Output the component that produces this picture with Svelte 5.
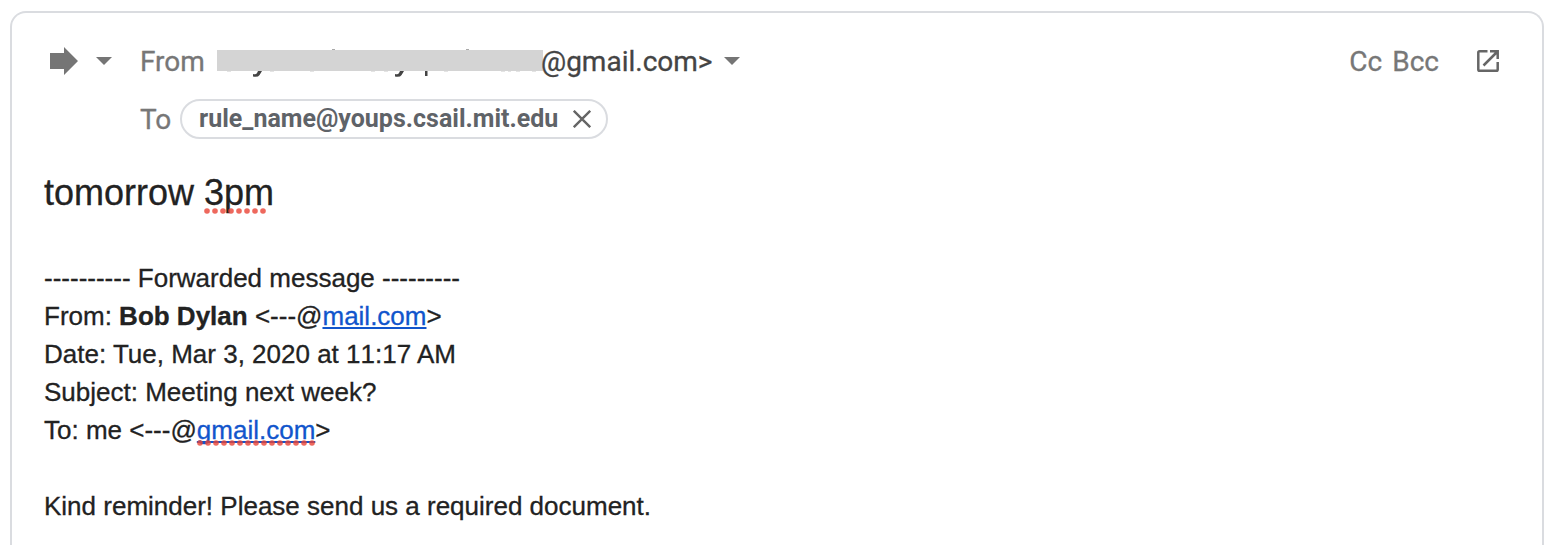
<script>
  const dots = (n, step) => Array.from({ length: n }, (_, i) => 3 + i * step);
  const tails = [
    'M45 22L42.600 26Q41 28.500 36 27.600V25Q39 26 40 24L41 22Z',
    'M187 22L184.600 26Q183 28.500 178 27.600V25Q181 26 182 24L183 22Z',
    'M208 21h2.500v6h-2.500z'
  ];
</script>

{#snippet spelling(n, width, step)}
  <svg class="spelling" {width} height="6" viewBox="0 0 {width} 6" aria-hidden="true">
    {#each dots(n, step) as cx}
      <circle {cx} cy="3" r="2.8" />
    {/each}
  </svg>
{/snippet}

<main class="compose">
  <header>
    <svg class="forward" width="28" height="28" viewBox="0 0 28 28"><path d="M0 6H14V0L28 14L14 28V22H0Z" /></svg>
    <svg class="caret mode" width="16" height="8" viewBox="0 0 16 8"><path d="M0 0H16L8 8Z" /></svg>
    <span class="label">From</span>
    <span class="redacted">
      <svg width="326" height="31" viewBox="0 0 326 31" aria-hidden="true">
        <path class="ink faint" d="M115 0h3v2h-3zM249 0h3v2h-3z" />
        <path class="hint" d="M10 22h4v1h-4zM53 22h4v1h-4zM93 22h4v1h-4zM154 22h4v1h-4zM167 22h4v1h-4zM227 22h4v1h-4zM284 22h4v1h-4zM291 22h3v1h-3zM299 22h4v1h-4zM315 22h4v1h-4z" />
        {#each tails as d}<path class="ink" {d} />{/each}
        <rect class="bar" y="1" width="326" height="21" />
      </svg>
    </span>
    <span class="address">@gmail.com&gt;</span>
    <svg class="caret" width="16" height="8" viewBox="0 0 16 8"><path d="M0 0H16L8 8Z" /></svg>
    <span class="copies"><span>Cc</span><span>Bcc</span></span>
    <svg class="popout" width="22" height="22" viewBox="0 0 22 22">
      <path d="M10.500 1.300H2.600Q1.300 1.300 1.300 2.600V19.400Q1.300 20.700 2.600 20.700H19.400Q20.700 20.700 20.700 19.400V12M6.500 15.500L20 2M13 1.300H20.700V9" />
    </svg>
  </header>

  <div class="recipients">
    <span class="label">To</span>
    <span class="chip">
      <b>rule_name@youps.csail.mit.edu</b>
      <svg width="18" height="18" viewBox="0 0 18 18"><path d="M.8.8L17.2 17.2M17.2.8L.8 17.2" /></svg>
    </span>
  </div>

  <div class="subject">tomorrow <span class="flagged">3pm{@render spelling(8, 64, 8)}</span></div>

  <div class="body">
    <div>---------- Forwarded message ---------</div>
    <div>From: <b>Bob Dylan</b> &lt;---@<span class="link">mail.com</span>&gt;</div>
    <div>Date: Tue, Mar 3, 2020 at <span class="time">11:17</span> AM</div>
    <div>Subject: Meeting next week?</div>
    <div>To: me &lt;---@<span class="link flagged">gmail.com{@render spelling(15, 119, 8)}</span>&gt;</div>
    <div class="message">Kind reminder! Please send us a required document.</div>
  </div>
</main>

<style>
  :global(body) { background: #fff; }
  .compose {
    box-sizing: border-box;
    width: 1534px;
    height: 534px;
    margin: 11px 0 0 10px;
    border: 2px solid #dadce0;
    border-bottom: 0;
    border-radius: 16px 16px 0 0;
    padding: 24px 43px 0 32px;
    overflow: hidden;
    color: #222;
    font-family: "Liberation Sans", Arial, sans-serif;
    white-space: nowrap;
    -webkit-text-stroke-width: .3px;
  }
  svg { display: block; flex: none; }
  header, .recipients {
    display: flex;
    align-items: center;
    font: 28px/48px Roboto, sans-serif;
    color: #777;
  }
  header { height: 48px; }
  .forward { margin-left: 6px; fill: #757575; }
  .caret { fill: #757575; }
  .mode { margin: 0 28px 0 18px; }
  .label { width: 77px; padding-top: 2px; }
  .redacted { width: 324px; height: 24px; overflow: visible; }
  .bar { fill: #d4d4d4; }
  .ink { fill: #444; }
  .faint { fill: #aaa; }
  .hint { fill: #e4e4e4; }
  .address { width: 183px; padding-top: 2px; color: #444; }
  .copies { display: flex; gap: 10px; margin-left: auto; padding-top: 2px; }
  .popout { margin-left: 38px; fill: none; stroke: #666; stroke-width: 2.5; }
  .recipients { height: 40px; margin: 14px 0 0 96px; }
  .recipients .label { width: 40px; }
  .chip {
    box-sizing: border-box;
    display: flex;
    align-items: center;
    width: 428px;
    height: 40px;
    padding: 0 15px 0 17px;
    border: 2px solid #dadce0;
    border-radius: 20px;
    justify-content: space-between;
    color: #5f6368;
    font-size: 25px;
    -webkit-text-stroke-width: 0;
  }
  .chip b { font-weight: 700; }
  .chip svg { fill: none; stroke: #666; stroke-width: 2.4; }
  .subject { height: 48px; margin-top: 30px; font-size: 36px; line-height: 48px; }
  .body { margin-top: 42px; font-size: 26px; line-height: 38px; }
  .time { font-kerning: none; }
  .message { margin-top: 38px; }
  .flagged { position: relative; }
  .spelling { position: absolute; left: 0; bottom: -1px; fill: #ea4335; opacity: .8; }
  .link { color: #15c; text-decoration: underline; text-decoration-thickness: 2px; text-underline-offset: 2px; text-decoration-skip-ink: none; }
</style>
